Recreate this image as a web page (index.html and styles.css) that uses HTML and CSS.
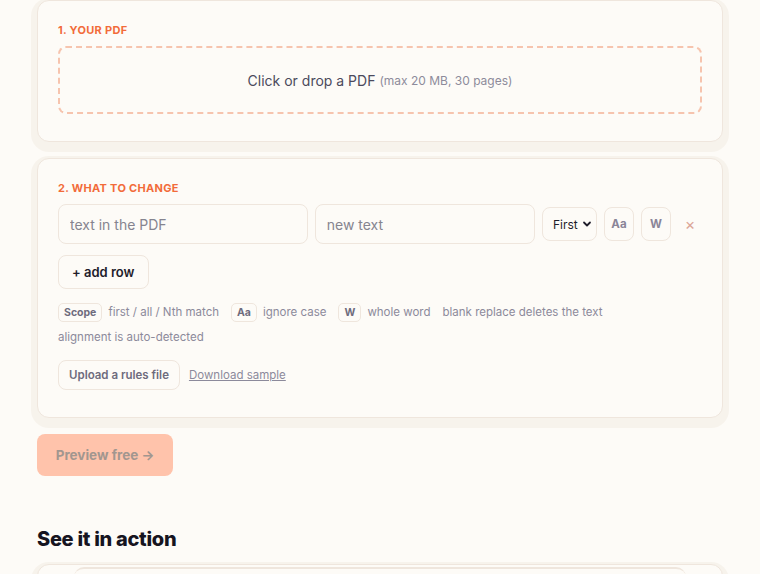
FILE: index.html
```html
<!DOCTYPE html>
<html lang="en">

<head>
    <meta charset="UTF-8">
    <meta name="viewport" content="width=device-width, initial-scale=1.0">
    <title>Replace text in a PDF</title>
    <link rel="stylesheet" href="styles.css">
</head>

<body>
    <main class="page">
        <section class="card">
            <div class="step-label">1. Your PDF</div>
            <label class="dropzone">
                Click or drop a PDF <span class="dropzone-hint">(max 20 MB, 30 pages)</span>
            </label>
        </section>

        <section class="card">
            <div class="step-label">2. What to change</div>
            <div class="rule-row">
                <input class="text-input find-input" type="text" placeholder="text in the PDF">
                <input class="text-input replace-input" type="text" placeholder="new text">
                <div class="scope-select">
                    First
                    <svg width="10" height="10" viewBox="0 0 10 10" aria-hidden="true">
                        <path d="M2 3.5 L5 6.5 L8 3.5" fill="none" stroke="#1f1d2b" stroke-width="1.8" stroke-linecap="round" stroke-linejoin="round"/>
                    </svg>
                </div>
                <button class="toggle-btn">Aa</button>
                <button class="toggle-btn">W</button>
                <button class="remove-btn">&times;</button>
            </div>

            <button class="add-row-btn">+ add row</button>

            <div class="legend">
                <span class="legend-item"><span class="chip">Scope</span> first / all / Nth match</span>
                <span class="legend-item"><span class="chip">Aa</span> ignore case</span>
                <span class="legend-item"><span class="chip">W</span> whole word</span>
                <span class="legend-item">blank replace deletes the text</span>
                <span class="legend-item">alignment is auto-detected</span>
            </div>

            <div class="rules-file">
                <button class="upload-btn">Upload a rules file</button>
                <a href="#" class="sample-link">Download sample</a>
            </div>
        </section>

        <button class="preview-btn">Preview free &rarr;</button>

        <h2 class="section-title">See it in action</h2>

        <section class="card demo-card">
            <div class="demo-frame"></div>
        </section>
    </main>
</body>

</html>
```

FILE: styles.css
```css
* {
    box-sizing: border-box;
    margin: 0;
    padding: 0;
}

body {
    font-family: Inter, 'Noto Sans', sans-serif;
    background-color: #fdfbf7;
    color: #1f1d2b;
    overflow: hidden;
}

.page {
    width: 686px;
    margin: 0 auto;
    display: flex;
    flex-direction: column;
    gap: 16px;
}

.card {
    background-color: #fdfbf7;
    border: 1px solid #efe6dd;
    border-radius: 12px;
    padding: 21px 20px 27px;
    box-shadow: 0 4px 0 6px #f7f3ec;
}

.step-label {
    color: #f26b3a;
    font-size: 11px;
    font-weight: 700;
    letter-spacing: 0.3px;
    text-transform: uppercase;
    line-height: 16px;
    margin-bottom: 8px;
}

.dropzone {
    display: flex;
    justify-content: center;
    align-items: center;
    gap: 4px;
    height: 68px;
    border: 2px dashed #f6c4ae;
    border-radius: 8px;
    font-size: 14px;
    color: #4b4a5c;
    cursor: pointer;
}

.dropzone-hint {
    font-size: 12px;
    color: #8d8b9b;
}

.rule-row {
    display: flex;
    align-items: center;
    gap: 7px;
    margin-top: 1px;
}

.text-input {
    height: 40px;
    min-width: 0;
    border: 1px solid #efe6dd;
    border-radius: 8px;
    background-color: #fdfbf7;
    padding: 0 11px;
    font-family: inherit;
    font-size: 14px;
    color: #1f1d2b;
}

.text-input::placeholder {
    color: #85848f;
}

.find-input {
    flex: 1.15 1 0;
}

.replace-input {
    flex: 1 1 0;
}

.scope-select {
    width: 55px;
    height: 34px;
    border: 1px solid #efe6dd;
    border-radius: 8px;
    display: flex;
    align-items: center;
    justify-content: space-between;
    padding: 0 4px 0 10px;
    font-size: 12px;
    color: #1f1d2b;
}

.toggle-btn {
    width: 30px;
    height: 34px;
    border: 1px solid #efe6dd;
    border-radius: 8px;
    background-color: #fdfbf7;
    font-family: inherit;
    font-size: 11.5px;
    font-weight: 700;
    color: #8a8598;
}

.remove-btn {
    width: 24px;
    height: 34px;
    border: none;
    background: none;
    font-family: inherit;
    font-size: 16px;
    color: #dba596;
}

.add-row-btn {
    align-self: flex-start;
    margin-top: 11px;
    height: 34px;
    padding: 0 13px;
    border: 1px solid #efe6dd;
    border-radius: 8px;
    background-color: #fdfbf7;
    font-family: inherit;
    font-size: 13px;
    font-weight: 600;
    color: #1f1d2b;
}

.legend {
    display: flex;
    flex-wrap: wrap;
    column-gap: 12px;
    margin-top: 11px;
    font-size: 11.5px;
    line-height: 25px;
    color: #8c8a9b;
}

.legend-item {
    display: inline-flex;
    align-items: center;
    gap: 6px;
}

.chip {
    display: inline-block;
    padding: 0 5px;
    line-height: 17px;
    border: 1px solid #efe6dd;
    border-radius: 5px;
    font-size: 10.5px;
    font-weight: 700;
    color: #6e6b7d;
}

.rules-file {
    display: flex;
    align-items: center;
    gap: 9px;
    margin-top: 10px;
}

.upload-btn {
    height: 30px;
    padding: 0 10px;
    border: 1px solid #efe6dd;
    border-radius: 8px;
    background-color: #fdfbf7;
    font-family: inherit;
    font-size: 11.5px;
    font-weight: 600;
    color: #6e6b7d;
}

.sample-link {
    font-size: 11.5px;
    color: #8c8a9b;
    text-decoration: underline;
}

.preview-btn {
    align-self: flex-start;
    width: 136px;
    height: 42px;
    border: none;
    border-radius: 8px;
    background-color: #ffc3ab;
    font-family: inherit;
    font-size: 13.5px;
    font-weight: 700;
    color: #a2968f;
}

.section-title {
    margin-top: 33px;
    font-size: 20px;
    font-weight: 800;
    color: #16141f;
    line-height: 28px;
    letter-spacing: -0.3px;
}

.demo-card {
    margin-top: -5px;
    padding: 0 36px;
    height: 60px;
}

.demo-frame {
    height: 100%;
    border-top: 2px solid #efe6dd;
    border-radius: 10px 10px 0 0;
    margin-top: 2px;
}
```
